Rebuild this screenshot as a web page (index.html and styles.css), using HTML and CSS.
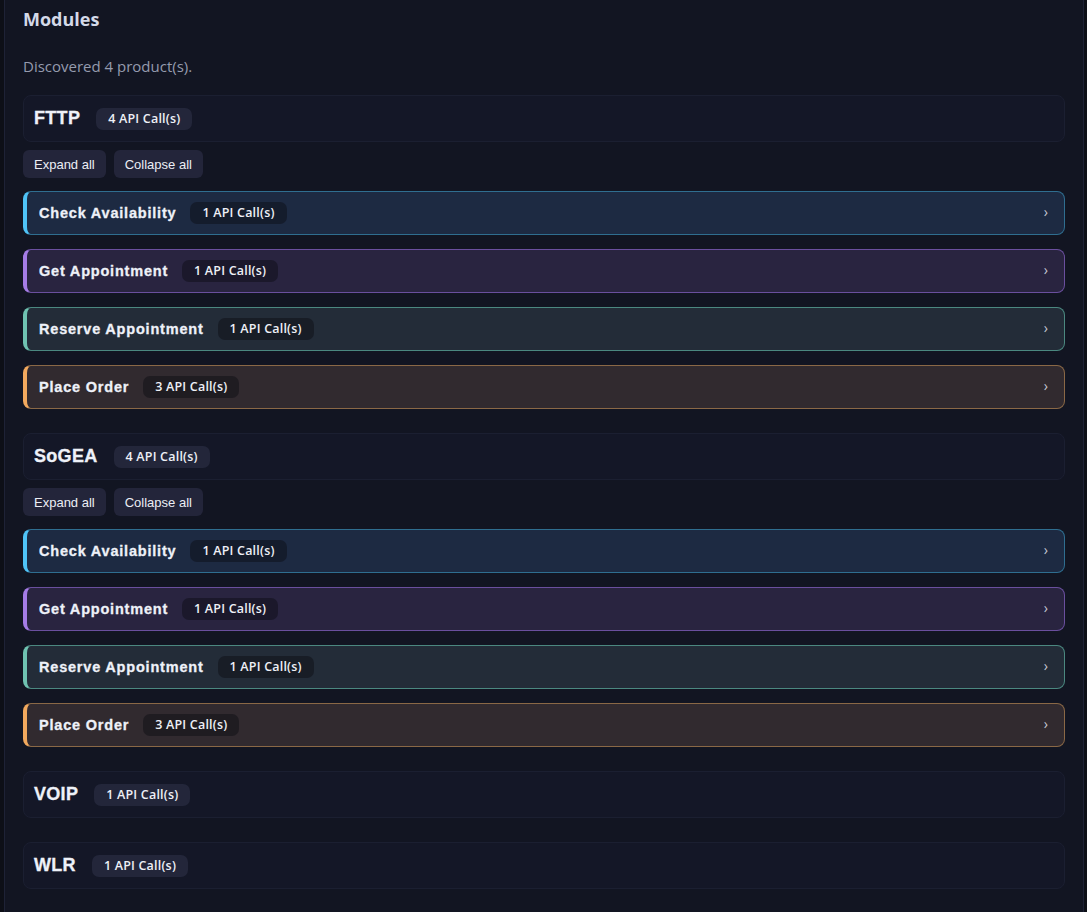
FILE: index.html
```html
<!DOCTYPE html>
<html lang="en">
<head>
    <meta charset="UTF-8">
    <meta name="viewport" content="width=device-width, initial-scale=1.0">
    <title>Modules</title>
    <link rel="stylesheet" href="styles.css">
</head>
<body>

    <div class="panel">
        <h2 class="panel-title">Modules</h2>
        <p class="summary">Discovered 4 product(s).</p>

        <!-- FTTP -->
        <div class="product">
            <div class="product-head">
                <span class="product-name">FTTP</span>
                <span class="badge">4 API Call(s)</span>
            </div>
            <div class="toolbar">
                <button class="tool-btn">Expand all</button>
                <button class="tool-btn">Collapse all</button>
            </div>
            <div class="flow-list">
                <div class="flow flow-blue">
                    <span class="flow-name">Check Availability</span>
                    <span class="badge badge-dark">1 API Call(s)</span>
                    <span class="chevron">&rsaquo;</span>
                </div>
                <div class="flow flow-purple">
                    <span class="flow-name">Get Appointment</span>
                    <span class="badge badge-dark">1 API Call(s)</span>
                    <span class="chevron">&rsaquo;</span>
                </div>
                <div class="flow flow-teal">
                    <span class="flow-name">Reserve Appointment</span>
                    <span class="badge badge-dark">1 API Call(s)</span>
                    <span class="chevron">&rsaquo;</span>
                </div>
                <div class="flow flow-orange">
                    <span class="flow-name">Place Order</span>
                    <span class="badge badge-dark">3 API Call(s)</span>
                    <span class="chevron">&rsaquo;</span>
                </div>
            </div>
        </div>

        <!-- SoGEA -->
        <div class="product">
            <div class="product-head">
                <span class="product-name">SoGEA</span>
                <span class="badge">4 API Call(s)</span>
            </div>
            <div class="toolbar">
                <button class="tool-btn">Expand all</button>
                <button class="tool-btn">Collapse all</button>
            </div>
            <div class="flow-list">
                <div class="flow flow-blue">
                    <span class="flow-name">Check Availability</span>
                    <span class="badge badge-dark">1 API Call(s)</span>
                    <span class="chevron">&rsaquo;</span>
                </div>
                <div class="flow flow-purple">
                    <span class="flow-name">Get Appointment</span>
                    <span class="badge badge-dark">1 API Call(s)</span>
                    <span class="chevron">&rsaquo;</span>
                </div>
                <div class="flow flow-teal">
                    <span class="flow-name">Reserve Appointment</span>
                    <span class="badge badge-dark">1 API Call(s)</span>
                    <span class="chevron">&rsaquo;</span>
                </div>
                <div class="flow flow-orange">
                    <span class="flow-name">Place Order</span>
                    <span class="badge badge-dark">3 API Call(s)</span>
                    <span class="chevron">&rsaquo;</span>
                </div>
            </div>
        </div>

        <!-- VOIP -->
        <div class="product">
            <div class="product-head">
                <span class="product-name">VOIP</span>
                <span class="badge">1 API Call(s)</span>
            </div>
        </div>

        <!-- WLR -->
        <div class="product">
            <div class="product-head">
                <span class="product-name">WLR</span>
                <span class="badge">1 API Call(s)</span>
            </div>
        </div>
    </div>

</body>
</html>
```

FILE: styles.css
```css
body {
    margin: 0;
    background-color: #0d0f17;
    font-family: "Open Sans", "Noto Sans", sans-serif;
    color: #e4e7f0;
}
.panel {
    width: 1080px;
    box-sizing: border-box;
    margin-left: 4px;
    min-height: 912px;
    padding: 1px 18px 20px;
    background-color: #121522;
    border-left: 1px solid #1e2236;
    border-right: 1px solid #1e2236;
}
.panel-title {
    margin: 6px 0 0;
    font-size: 18px;
    line-height: 24px;
    font-weight: 700;
    color: #d4d9e8;
}
.summary {
    margin: 25px 0 19px;
    font-size: 15px;
    line-height: 20px;
    color: #959bae;
}
.product {
    margin-bottom: 24px;
}
.product-head {
    display: flex;
    align-items: center;
    gap: 16px;
    height: 45px;
    padding: 0 10px;
    background-color: #141727;
    border: 1px solid #1b1f31;
    border-radius: 8px;
}
.product-name {
    font-family: "Liberation Sans", Arial, sans-serif;
    font-size: 18px;
    font-weight: 700;
    letter-spacing: 0.3px;
    -webkit-text-stroke: 0.3px currentColor;
    color: #eef1f8;
}
.badge {
    display: inline-block;
    padding: 0 12px;
    height: 22px;
    line-height: 22px;
    border-radius: 7px;
    background-color: #23263a;
    font-size: 12.5px;
    font-weight: 600;
    letter-spacing: 0.2px;
    color: #eef0f6;
}
.badge-dark {
    background-color: rgba(10, 12, 18, 0.45);
}
.toolbar {
    display: flex;
    gap: 8px;
    margin: 8px 0 13px;
}
.tool-btn {
    height: 28px;
    padding: 0 11px;
    border: none;
    border-radius: 6px;
    background-color: #23253a;
    color: #eceef5;
    font-family: "Liberation Sans", Arial, sans-serif;
    font-size: 13px;
    cursor: pointer;
}
.tool-btn:hover {
    background-color: #2c2f47;
}
.flow-list {
    display: flex;
    flex-direction: column;
    gap: 14px;
}
.flow {
    display: flex;
    align-items: center;
    gap: 14px;
    height: 42px;
    padding: 0 16px 0 12px;
    border: 1px solid;
    border-left-width: 4px;
    border-radius: 8px;
    cursor: pointer;
}
.flow-name {
    font-family: "Liberation Sans", Arial, sans-serif;
    font-size: 14.5px;
    font-weight: 700;
    letter-spacing: 0.8px;
    -webkit-text-stroke: 0.3px currentColor;
    color: #eef1f8;
}
.chevron {
    margin-left: auto;
    margin-top: -3px;
    font-size: 14px;
    color: #c3c7d4;
}
.flow-blue {
    background-color: #1d2a42;
    border-color: #2f6e90;
    border-left-color: #4fc3f7;
}
.flow-purple {
    background-color: #292440;
    border-color: #6a4f9e;
    border-left-color: #a57ce6;
}
.flow-teal {
    background-color: #232c38;
    border-color: #4b8880;
    border-left-color: #6fc2b1;
}
.flow-orange {
    background-color: #312a2f;
    border-color: #8a6846;
    border-left-color: #f2a95e;
}
```
